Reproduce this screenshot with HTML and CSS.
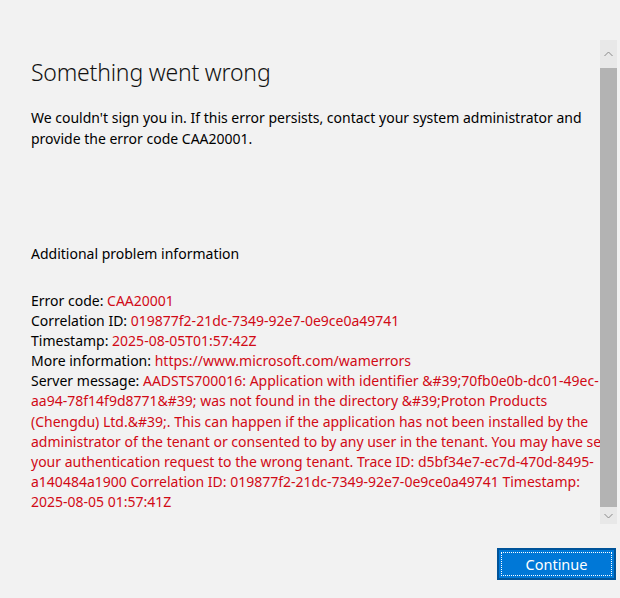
FILE: index.html
```html
<!DOCTYPE html>
<html>
<head>
<meta charset="utf-8">
<link rel="stylesheet" href="styles.css">
</head>
<body>
<div class="window">
  <div class="scroll">
    <div class="content">
      <h1 class="title">Something went wrong</h1>
      <p class="intro">We couldn't sign you in. If this error persists, contact your system administrator and provide the error code CAA20001.</p>
      <p class="section">Additional problem information</p>
      <div class="details">
        <div>Error code: <span class="err">CAA20001</span></div>
        <div>Correlation ID: <span class="err">019877f2-21dc-7349-92e7-0e9ce0a49741</span></div>
        <div>Timestamp: <span class="err">2025-08-05T01:57:42Z</span></div>
        <div>More information: <span class="err">https://www.microsoft.com/wamerrors</span></div>
        <div>Server message: <span class="err">AADSTS700016: Application with identifier &amp;#39;70fb0e0b-dc01-49ec-<br>aa94-78f14f9d8771&amp;#39; was not found in the directory &amp;#39;Proton Products<br>(Chengdu) Ltd.&amp;#39;. This can happen if the application has not been installed by the<br>administrator of the tenant or consented to by any user in the tenant. You may have sent<br>your authentication request to the wrong tenant. Trace ID: d5bf34e7-ec7d-470d-8495-<br>a140484a1900 Correlation ID: 019877f2-21dc-7349-92e7-0e9ce0a49741 Timestamp:<br>2025-08-05 01:57:41Z</span></div>
      </div>
    </div>
    <div class="scrollbar">
      <div class="arrow">
        <svg width="17" height="17" viewBox="0 0 17 17"><path d="M4.5 10 L8.5 6 L12.5 10" fill="none" stroke="#8a8a8a" stroke-width="1"/></svg>
      </div>
      <div class="thumb"></div>
      <div class="arrow">
        <svg width="17" height="17" viewBox="0 0 17 17"><path d="M4.5 7 L8.5 11 L12.5 7" fill="none" stroke="#8a8a8a" stroke-width="1"/></svg>
      </div>
    </div>
  </div>
  <div class="footer">
    <button class="btn"><span class="focus">Continue</span></button>
  </div>
</div>
</body>
</html>
```
FILE: styles.css
```css
html, body {
  margin: 0;
  padding: 0;
  background: #f2f2f2;
}
body {
  width: 620px;
  height: 598px;
  overflow: hidden;
  font-family: "Noto Sans", "Open Sans", sans-serif;
  color: #000;
}
.window {
  display: flex;
  flex-direction: column;
  height: 598px;
}
.scroll {
  position: relative;
  height: 532px;
  overflow: hidden;
}
.content {
  padding: 56px 0 0 31px;
  width: 585px;
}
.title {
  margin: 0;
  font-size: 23px;
  font-weight: 300;
  line-height: 32px;
  letter-spacing: -0.2px;
  color: #111;
}
.intro {
  margin: 19px 0 0 0;
  font-size: 14px;
  line-height: 21px;
}
.section {
  margin: 94px 0 0 0;
  font-size: 14px;
  line-height: 21px;
}
.details {
  margin-top: 27px;
  font-size: 14px;
  line-height: 20.1px;
  white-space: nowrap;
}
.err {
  color: #d10a16;
}
.scrollbar {
  position: absolute;
  left: 600px;
  top: 40px;
  width: 17px;
  height: 484px;
  background: #e8e8e8;
  display: flex;
  flex-direction: column;
}
.arrow {
  height: 28px;
  display: flex;
  align-items: center;
  justify-content: center;
}
.arrow:last-child {
  height: 17px;
}
.thumb {
  flex: 1;
  background: #b3b3b3;
}
.footer {
  display: flex;
  justify-content: flex-end;
  padding: 16px 4px 0 0;
}
.btn {
  width: 119px;
  height: 32px;
  margin: 0;
  padding: 2px;
  border: 2px solid #00549a;
  background: #0078d7;
  color: #fff;
  font-family: "Noto Sans", "Open Sans", sans-serif;
  font-size: 14.5px;
  display: flex;
  box-sizing: border-box;
}
.focus {
  flex: 1;
  border: 1px dotted #ffffff;
  display: flex;
  align-items: center;
  justify-content: center;
  line-height: 18px;
}
```
